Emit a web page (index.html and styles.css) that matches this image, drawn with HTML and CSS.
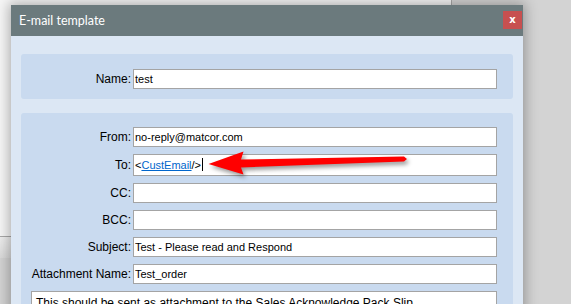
FILE: index.html
```html
<!DOCTYPE html>
<html lang="en">
<head>
    <meta charset="UTF-8">
    <title>E-mail template</title>
    <link rel="stylesheet" href="styles.css">
</head>
<body>

<div class="back-window"></div>
<div class="back-strip"></div>

<div class="dialog">
    <div class="titlebar">
        <span class="title">E-mail template</span>
        <span class="close">x</span>
    </div>

    <div class="dialog-body">
        <div class="panel panel-name">
            <div class="row">
                <label>Name:</label>
                <div class="field">test</div>
            </div>
        </div>

        <div class="panel panel-main">
            <div class="row">
                <label>From:</label>
                <div class="field">no-reply@matcor.com</div>
            </div>
            <div class="row">
                <label>To:</label>
                <div class="field field-rich">&lt;<a class="tag">CustEmail</a>/&gt;<span class="caret"></span></div>
            </div>
            <div class="row">
                <label>CC:</label>
                <div class="field"></div>
            </div>
            <div class="row">
                <label>BCC:</label>
                <div class="field"></div>
            </div>
            <div class="row">
                <label>Subject:</label>
                <div class="field">Test - Please read and Respond</div>
            </div>
            <div class="row">
                <label>Attachment Name:</label>
                <div class="field">Test_order</div>
            </div>
            <div class="memo">This should be sent as attachment to the Sales Acknowledge Pack Slip</div>
        </div>
    </div>
</div>

<!-- annotation arrow drawn over the screenshot -->
<svg class="arrow" width="571" height="304" viewBox="0 0 571 304">
    <polygon points="208.5,164 243.5,151.5 241,159.5 404,156.5 407,159 404,161.5 241,167.5 243.5,174.5" fill="#ff0000"/>
</svg>

</body>
</html>
```

FILE: styles.css
```css
body {
    margin: 0;
    padding: 5px 0 0 11px;
    height: 304px;
    box-sizing: border-box;
    overflow: hidden;
    position: relative;
    background-color: #d3d3d3;
    font-family: "Liberation Sans", Arial, sans-serif;
    color: #000;
}

.back-window {
    position: absolute;
    left: -2px;
    top: -2px;
    width: 453px;
    height: 238px;
    background-color: #f6f6f6;
    border-right: 1px solid #a8a8a8;
    border-bottom: 1px solid #a8a8a8;
}

.back-strip {
    position: absolute;
    left: 0;
    top: 237px;
    width: 20px;
    height: 21px;
    background: linear-gradient(#eeeeee, #dadada);
}

.dialog {
    position: relative;
    width: 512px;
    background-color: #dce7f4;
    box-shadow: 0 0 12px 2px rgba(0,0,0,0.3);
}

.titlebar {
    height: 31px;
    background-color: #6b7a7d;
    display: flex;
    align-items: center;
    justify-content: space-between;
    padding: 0 1px 0 8px;
}

.title {
    font-family: Lato, "Open Sans", sans-serif;
    font-size: 12.5px;
    color: #fff;
    margin-top: -1px;
}

.close {
    width: 19px;
    height: 18px;
    margin-top: -2px;
    background-color: #c75050;
    color: #fff;
    font-family: "DejaVu Sans", sans-serif;
    font-weight: bold;
    font-size: 10px;
    line-height: 17px;
    text-align: center;
}

.dialog-body {
    padding: 18px 10px 40px 10px;
}

.panel {
    background-color: #c9daef;
    border-radius: 3px;
    padding: 0 16px 0 0;
}

.panel-name {
    padding-top: 15px;
    padding-bottom: 10px;
    margin-bottom: 14px;
}

.panel-main {
    padding-top: 14px;
    padding-bottom: 20px;
}

.row {
    display: grid;
    grid-template-columns: 110px 364px;
    column-gap: 2px;
    align-items: center;
}

.panel-main .row {
    margin-bottom: 7px;
}

.row label {
    font-size: 12px;
    text-align: right;
}

.field {
    height: 20px;
    box-sizing: border-box;
    border: 1px solid #a4a4a4;
    background-color: #fff;
    font-size: 11px;
    line-height: 18px;
    padding: 0 1px;
    white-space: nowrap;
    overflow: hidden;
}

.field-rich {
    height: 22px;
    line-height: 20px;
}

.tag {
    color: #0066cc;
    text-decoration: underline;
}

.caret {
    display: inline-block;
    width: 1px;
    height: 13px;
    background-color: #000;
    vertical-align: -2px;
    margin-left: 1px;
}

.memo {
    margin: 6px 0 0 10px;
    height: 60px;
    border: 1px solid #a4a4a4;
    background-color: #fff;
    font-size: 12px;
    line-height: 16px;
    padding: 3px 4px;
}

.arrow {
    position: absolute;
    left: 0;
    top: 0;
    filter: drop-shadow(2px 3px 2px rgba(0,0,0,0.4));
}
```
